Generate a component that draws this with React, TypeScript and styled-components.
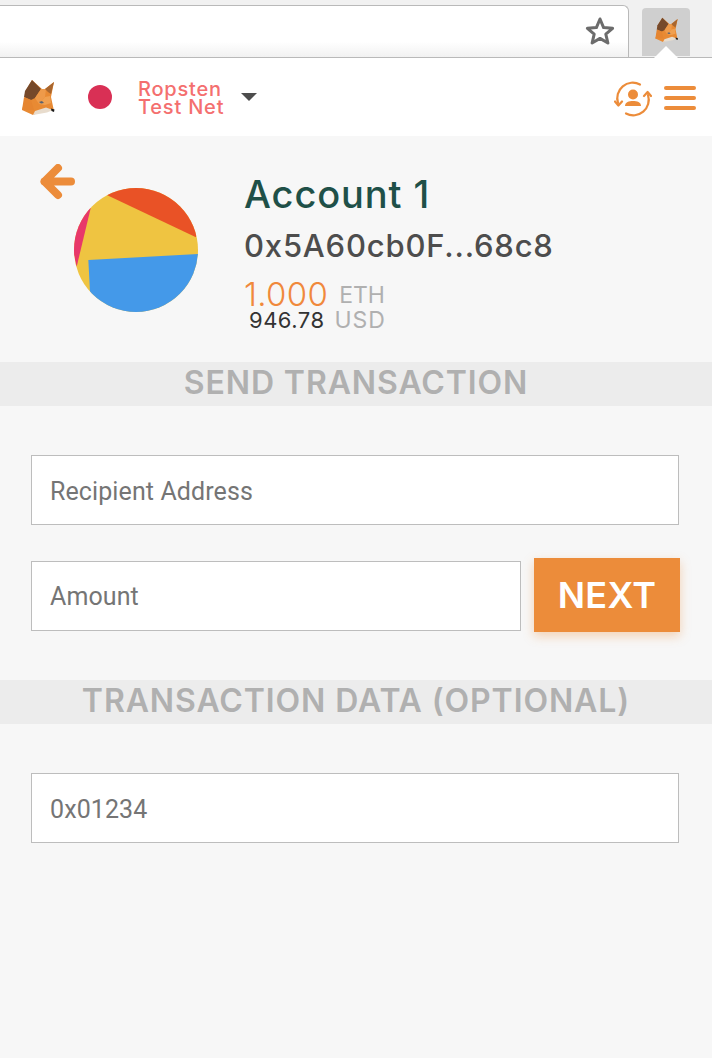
import styled, { createGlobalStyle } from "styled-components";

const ORANGE = "#ec8c3a";

const GlobalStyle = createGlobalStyle`
  html, body {
    margin: 0;
    padding: 0;
    background: #f7f7f7;
    font-family: Inter, "Open Sans", sans-serif;
  }
  * {
    box-sizing: border-box;
  }
`;

const Fox = ({ size }: { size: number }) => (
  <svg width={size} height={size} viewBox="0 0 36 36">
    <polygon points="5,13 12,1 22,10 25,10 34,3 31,18 34,32 27,30 13,36 2,31 5,20" fill="#e88a33" />
    <polygon points="12,1 5,12 4,18 11,21 15,19 21,10" fill="#76492a" />
    <polygon points="21,10 15,19 19,25 25,18 26,10" fill="#ee9a4a" />
    <polygon points="25,10 34,3 31,15 28,13" fill="#a8662f" />
    <polygon points="4,18 11,21 14,31 2,31" fill="#e58530" />
    <polygon points="19,25 25,18 30,17 31,24 25,26" fill="#f0a050" />
    <polygon points="19,23 22,22 24,24 21,24.5" fill="#5a6270" />
    <polygon points="15,32 26,28.5 33,31 27,33.5 13,36" fill="#e8dccd" />
    <polygon points="31,29.5 34.5,30.5 34,33 31.5,32" fill="#1b1b1b" />
  </svg>
);

const Star = () => (
  <svg width="30" height="30" viewBox="0 0 30 30">
    <polygon
      points="15,3 18.6,11.6 27.6,12.3 20.8,18.2 22.9,27 15,22.4 7.1,27 9.2,18.2 2.4,12.3 11.4,11.6"
      fill="none"
      stroke="#6c6c6c"
      strokeWidth="3"
      strokeLinejoin="round"
    />
  </svg>
);

const AccountSwitch = () => (
  <svg width="38" height="36" viewBox="0 0 38 36" fill="none" stroke={ORANGE} strokeWidth="2.2">
    <path d="M4 22 A15.5 15.5 0 0 1 26 3.5" strokeLinecap="round" />
    <path d="M34 14 A15.5 15.5 0 0 1 12 32.5" strokeLinecap="round" />
    <path d="M1 20.5 L4.4 24.5 L8 20.5" strokeLinecap="round" strokeLinejoin="round" />
    <path d="M30 15 L33.6 11 L37 15" strokeLinecap="round" strokeLinejoin="round" />
    <circle cx="19" cy="13.5" r="5" fill={ORANGE} stroke="none" />
    <path d="M11 25 C11 21 15 20 19 20 C23 20 27 21 27 25 Z" fill={ORANGE} stroke="none" />
  </svg>
);

const BackArrow = () => (
  <svg width="36" height="36" viewBox="0 0 36 36" fill="none" stroke={ORANGE} strokeWidth="8" strokeLinecap="round" strokeLinejoin="round">
    <path d="M31 17.5 H4.5 M18 4 L4.5 17.5 L18 31" />
  </svg>
);

const Identicon = () => (
  <IdenticonDisc>
    <svg width="124" height="124" viewBox="0 0 372 372">
      <rect width="372" height="372" fill="#efc441" />
      <polygon points="100,22 366,148 400,0 100,-10" fill="#e95226" />
      <polygon points="50,61 8,236 -20,120 20,40" fill="#e8386a" />
      <polygon points="43,216 372,198 372,372 50,372 48,311" fill="#4499e9" />
    </svg>
  </IdenticonDisc>
);

const App = () => (
  <>
    <GlobalStyle />
    <Toolbar>
      <AddressBar>
        <Star />
      </AddressBar>
      <ExtensionButton>
        <Fox size={25} />
        <Notch />
      </ExtensionButton>
    </Toolbar>

    <AppBar>
      <NetworkGroup>
        <Fox size={36} />
        <NetworkDot />
        <NetworkName>
          Ropsten
          <br />
          Test Net
        </NetworkName>
        <Caret />
      </NetworkGroup>
      <ActionGroup>
        <AccountSwitch />
        <Hamburger>
          <span />
          <span />
          <span />
        </Hamburger>
      </ActionGroup>
    </AppBar>

    <AccountPanel>
      <BackSlot>
        <BackArrow />
      </BackSlot>
      <Identicon />
      <AccountInfo>
        <AccountName>Account 1</AccountName>
        <Address>0x5A60cb0F...68c8</Address>
        <Balance>
          <BalanceValue>1.000</BalanceValue>
          <BalanceUnit>ETH</BalanceUnit>
        </Balance>
        <Fiat>
          <FiatValue>946.78</FiatValue>
          <FiatUnit>USD</FiatUnit>
        </Fiat>
      </AccountInfo>
    </AccountPanel>

    <SectionTitle>SEND TRANSACTION</SectionTitle>
    <FormSection>
      <Field placeholder="Recipient Address" />
      <AmountRow>
        <AmountField placeholder="Amount" />
        <NextButton>NEXT</NextButton>
      </AmountRow>
    </FormSection>

    <SectionTitle>TRANSACTION DATA (OPTIONAL)</SectionTitle>
    <DataSection>
      <Field placeholder="0x01234" />
    </DataSection>
  </>
);

const Toolbar = styled.div`
  display: flex;
  align-items: flex-start;
  height: 57px;
  padding-top: 5px;
  background: #f1f1f1;
`;

const AddressBar = styled.div`
  display: flex;
  align-items: center;
  justify-content: flex-end;
  width: 629px;
  height: 52px;
  padding: 0 13px 1px 0;
  background: linear-gradient(#ffffff 70%, #f1f1f1);
  border: 1px solid #b9b9b9;
  border-left: none;
  border-bottom: none;
  border-radius: 0 6px 0 0;
`;

const ExtensionButton = styled.div`
  position: relative;
  display: flex;
  justify-content: center;
  width: 48px;
  height: 48px;
  margin: 3px 0 0 13px;
  padding-top: 9px;
  background: #cfcfcf;
  border-radius: 4px 4px 0 0;
`;

const Notch = styled.div`
  position: absolute;
  left: 9px;
  bottom: -5px;
  width: 30px;
  height: 15px;
  background: #ffffff;
  clip-path: polygon(50% 0, 100% 100%, 0 100%);
`;

const AppBar = styled.div`
  display: flex;
  align-items: center;
  justify-content: space-between;
  height: 79px;
  padding: 0 16px 0 20px;
  background: #ffffff;
  border-top: 1px solid #b9b9b9;
`;

const NetworkGroup = styled.div`
  display: flex;
  align-items: center;
`;

const NetworkDot = styled.div`
  width: 24px;
  height: 24px;
  margin-left: 32px;
  border-radius: 50%;
  background: #d93055;
`;

const NetworkName = styled.div`
  margin: 2px 0 0 26px;
  font-size: 20px;
  font-weight: 500;
  line-height: 18px;
  letter-spacing: 0.8px;
  color: #f46f6f;
`;

const Caret = styled.div`
  width: 0;
  height: 0;
  margin-left: 17px;
  border-left: 8px solid transparent;
  border-right: 8px solid transparent;
  border-top: 8px solid #4d4d4d;
`;

const ActionGroup = styled.div`
  display: flex;
  align-items: center;
  gap: 12px;

  > svg {
    margin-top: 4px;
  }
`;

const Hamburger = styled.div`
  display: flex;
  flex-direction: column;
  gap: 6px;
  margin-top: 1px;

  span {
    display: block;
    width: 32px;
    height: 4px;
    border-radius: 2px;
    background: ${ORANGE};
  }
`;

const AccountPanel = styled.div`
  display: flex;
  align-items: flex-start;
  height: 226px;
  padding: 28px 0 0 40px;
`;

const BackSlot = styled.div`
  width: 34px;
  height: 36px;
`;

const IdenticonDisc = styled.div`
  width: 124px;
  height: 124px;
  margin-top: 24px;
  border-radius: 50%;
  overflow: hidden;

  svg {
    display: block;
  }
`;

const AccountInfo = styled.div`
  display: flex;
  flex-direction: column;
  margin: 9px 0 0 46px;
`;

const AccountName = styled.div`
  font-size: 38px;
  font-weight: 500;
  line-height: 42px;
  letter-spacing: 0.9px;
  color: #1f5048;
`;

const Address = styled.div`
  margin-top: 14px;
  font-size: 31px;
  font-weight: 500;
  line-height: 34px;
  letter-spacing: 0.8px;
  color: #4d4d4d;
`;

const Balance = styled.div`
  margin-top: 15px;
  line-height: 32px;
`;

const BalanceValue = styled.span`
  font-size: 33px;
  font-weight: 300;
  letter-spacing: 0.3px;
  color: #f0893c;
`;

const BalanceUnit = styled.span`
  margin-left: 11px;
  font-size: 23px;
  vertical-align: 3px;
  color: #b0b0b0;
`;

const Fiat = styled.div`
  display: flex;
  align-items: baseline;
  margin: -10px 0 0 5px;
  line-height: 28px;
`;

const FiatValue = styled.span`
  font-size: 22px;
  letter-spacing: 0.5px;
  color: #333333;
`;

const FiatUnit = styled.span`
  margin-left: 10px;
  font-size: 23px;
  letter-spacing: 0.9px;
  color: #b0b0b0;
`;

const SectionTitle = styled.div`
  height: 44px;
  font-size: 32px;
  font-weight: 600;
  line-height: 42px;
  letter-spacing: 0.9px;
  text-align: center;
  color: #b0b0b0;
  background: #ececec;
`;

const FormSection = styled.div`
  display: flex;
  flex-direction: column;
  gap: 33px;
  height: 274px;
  padding: 49px 33px 0 31px;
`;

const DataSection = styled.div`
  padding: 49px 33px 0 31px;
`;

const Field = styled.input`
  display: block;
  width: 100%;
  height: 70px;
  padding: 2px 18px 0;
  font-family: Roboto, "Open Sans", sans-serif;
  font-size: 25px;
  letter-spacing: 0.1px;
  background: #ffffff;
  border: 1px solid #bdbdbd;
  outline: none;

  &::placeholder {
    color: #757575;
    opacity: 1;
  }
`;

const AmountRow = styled.div`
  display: flex;
  align-items: flex-start;
  gap: 13px;
  margin-right: -1px;
`;

const AmountField = styled(Field)`
  width: 490px;
  margin-top: 3px;
  padding-top: 0;
`;

const NextButton = styled.button`
  width: 146px;
  height: 74px;
  font-family: Inter, "Open Sans", sans-serif;
  font-size: 36px;
  font-weight: 600;
  letter-spacing: 0.3px;
  color: #ffffff;
  background: ${ORANGE};
  border: none;
  box-shadow: 0 4px 10px rgba(236, 140, 58, 0.35);
`;

export default App;
